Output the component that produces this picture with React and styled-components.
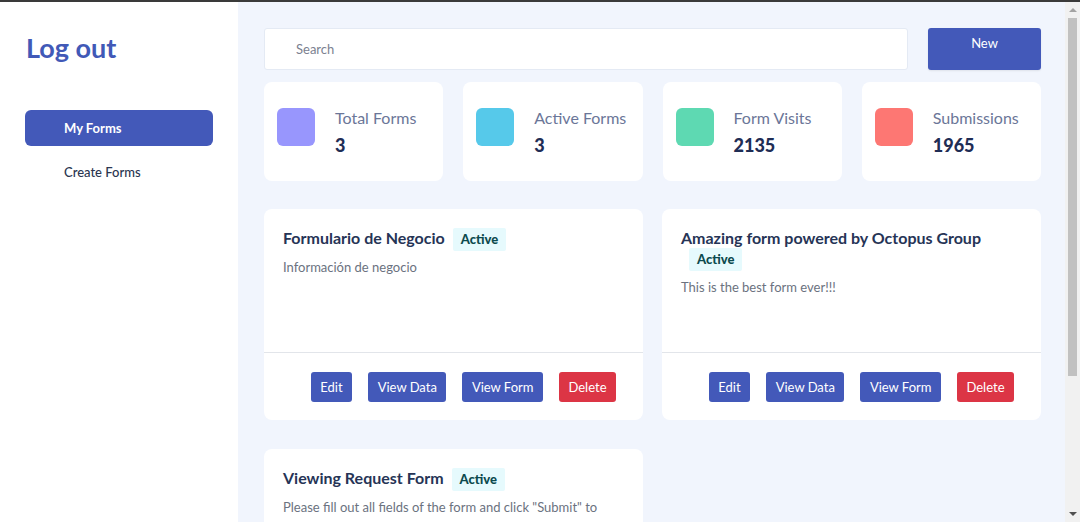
import styled, { createGlobalStyle } from "styled-components";

const GlobalStyle = createGlobalStyle`
  * { box-sizing: border-box; }
  body {
    margin: 0;
    border-top: 2px solid #3a3a3a;
    font-family: Lato, "Noto Sans", sans-serif;
    background: #f1f5fd;
  }
`;

const stats = [
  { label: "Total Forms", value: "3", color: "#9896fd" },
  { label: "Active Forms", value: "3", color: "#56c9ea" },
  { label: "Form Visits", value: "2135", color: "#5ed9b2" },
  { label: "Submissions", value: "1965", color: "#fd7773" },
];

const forms = [
  { title: "Formulario de Negocio", desc: "Información de negocio" },
  { title: "Amazing form powered by Octopus Group", desc: "This is the best form ever!!!" },
  {
    title: "Viewing Request Form",
    desc: 'Please fill out all fields of the form and click "Submit" to request a viewing. It should take less than 2 minutes to complete.',
  },
];

const App = () => {
  return (
    <>
      <GlobalStyle />
      <Layout>
        <Sidebar>
          <Logout>Log out</Logout>
          <Nav>
            <NavItem $active href="#">My Forms</NavItem>
            <NavItem href="#">Create Forms</NavItem>
          </Nav>
        </Sidebar>
        <Main>
          <TopBar>
            <Search placeholder="Search" />
            <NewButton>New</NewButton>
          </TopBar>
          <Stats>
            {stats.map((s) => (
              <StatCard key={s.label}>
                <StatIcon $color={s.color} />
                <div>
                  <StatLabel>{s.label}</StatLabel>
                  <StatValue>{s.value}</StatValue>
                </div>
              </StatCard>
            ))}
          </Stats>
          <Cards>
            {forms.map((f) => (
              <Card key={f.title}>
                <CardBody>
                  <CardTitle>
                    {f.title}
                    <Badge>Active</Badge>
                  </CardTitle>
                  <CardDesc>{f.desc}</CardDesc>
                </CardBody>
                <CardFooter>
                  <Button>Edit</Button>
                  <Button>View Data</Button>
                  <Button>View Form</Button>
                  <Button $danger>Delete</Button>
                </CardFooter>
              </Card>
            ))}
          </Cards>
        </Main>
      </Layout>
      {/* page scrollbar, drawn over the right edge */}
      <ScrollTrack>
        <Arrow $dir="up" />
        <Thumb />
        <Arrow $dir="down" />
      </ScrollTrack>
    </>
  );
};

const Layout = styled.div`
  display: flex;
  min-height: 100vh;
`;

const Sidebar = styled.aside`
  width: 238px;
  flex-shrink: 0;
  background: #fff;
  padding: 30px 25px;
`;

const Logout = styled.h1`
  margin: 0 0 0 1px;
  font-size: 27px;
  line-height: 32px;
  font-weight: 700;
  color: #4159b7;
`;

const Nav = styled.nav`
  margin-top: 46px;
  display: flex;
  flex-direction: column;
  gap: 8px;
`;

const NavItem = styled.a`
  display: flex;
  align-items: center;
  height: 36px;
  padding-left: 39px;
  border-radius: 6px;
  font-size: 13px;
  font-weight: ${(p) => (p.$active ? 700 : 500)};
  text-decoration: none;
  color: ${(p) => (p.$active ? "#fff" : "#2a3550")};
  background: ${(p) => (p.$active ? "#4359b9" : "transparent")};
`;

const Main = styled.main`
  flex: 1;
  padding: 26px 39px 52px 26px;
`;

const TopBar = styled.div`
  display: flex;
  gap: 20px;
  height: 42px;
`;

const Search = styled.input`
  flex: 1;
  height: 42px;
  border: 1px solid #e4eaf4;
  border-radius: 3px;
  padding: 0 31px;
  font-family: inherit;
  font-size: 13px;
  color: #333;
  outline: none;
  &::placeholder { color: #7b8190; }
`;

const NewButton = styled.button`
  width: 113px;
  height: 42px;
  border: none;
  border-radius: 3px;
  background: #4359b9;
  color: #fff;
  font-family: inherit;
  font-size: 13px;
  padding: 7px 0 0;
  display: flex;
  justify-content: center;
  align-items: flex-start;
  box-shadow: 0 1px 2px rgba(0, 0, 0, 0.08);
`;

const Stats = styled.div`
  margin-top: 12px;
  display: grid;
  grid-template-columns: repeat(4, 1fr);
  gap: 20px;
`;

const StatCard = styled.div`
  height: 99px;
  background: #fff;
  border-radius: 8px;
  padding: 26px 13px;
  display: flex;
  gap: 20px;
`;

const StatIcon = styled.div`
  width: 38px;
  height: 38px;
  border-radius: 6px;
  background: ${(p) => p.$color};
`;

const StatLabel = styled.div`
  font-size: 16px;
  line-height: 20px;
  color: #6b7698;
`;

const StatValue = styled.div`
  margin-top: 6px;
  font-size: 18px;
  line-height: 22px;
  font-weight: 900;
  color: #1f2d55;
`;

const Cards = styled.div`
  margin-top: 28px;
  display: grid;
  grid-template-columns: 1fr 1fr;
  column-gap: 19px;
  row-gap: 29px;
`;

const Card = styled.div`
  background: #fff;
  border-radius: 8px;
  display: flex;
  flex-direction: column;
`;

const CardBody = styled.div`
  min-height: 143px;
  padding: 19px 19px 18px;
`;

const CardTitle = styled.h3`
  margin: 0;
  font-size: 16px;
  line-height: 20px;
  font-weight: 700;
  color: #263456;
`;

const Badge = styled.span`
  display: inline-block;
  vertical-align: middle;
  margin-left: 8px;
  height: 23px;
  line-height: 23px;
  padding: 0 8px;
  background: #e6fafd;
  color: #0c4a4e;
  font-size: 13px;
  font-weight: 900;
  border-radius: 2px;
`;

const CardDesc = styled.p`
  margin: 6px 0 0;
  font-size: 13px;
  line-height: 20px;
  color: #6b7280;
`;

const CardFooter = styled.div`
  border-top: 1px solid #e2e5ea;
  padding: 19px 27px 18px;
  display: flex;
  justify-content: flex-end;
  gap: 16px;
`;

const Button = styled.button`
  height: 30px;
  padding: 0 9.5px;
  border: none;
  border-radius: 3px;
  background: ${(p) => (p.$danger ? "#dc3545" : "#4359b9")};
  color: #fff;
  font-family: inherit;
  font-size: 13px;
`;

const ScrollTrack = styled.div`
  position: fixed;
  top: 2px;
  right: 0;
  bottom: 0;
  width: 15px;
  background: #f1f1f1;
  display: flex;
  flex-direction: column;
  align-items: center;
`;

const Arrow = styled.div`
  flex-shrink: 0;
  width: 0;
  height: 0;
  margin: 6px 0;
  border-left: 4px solid transparent;
  border-right: 4px solid transparent;
  ${(p) =>
    p.$dir === "up"
      ? "border-bottom: 4px solid #a3a3a3;"
      : "border-top: 4px solid #505050; margin-top: auto;"}
`;

const Thumb = styled.div`
  width: 9px;
  height: 358px;
  background: #c1c1c1;
`;

export default App;
